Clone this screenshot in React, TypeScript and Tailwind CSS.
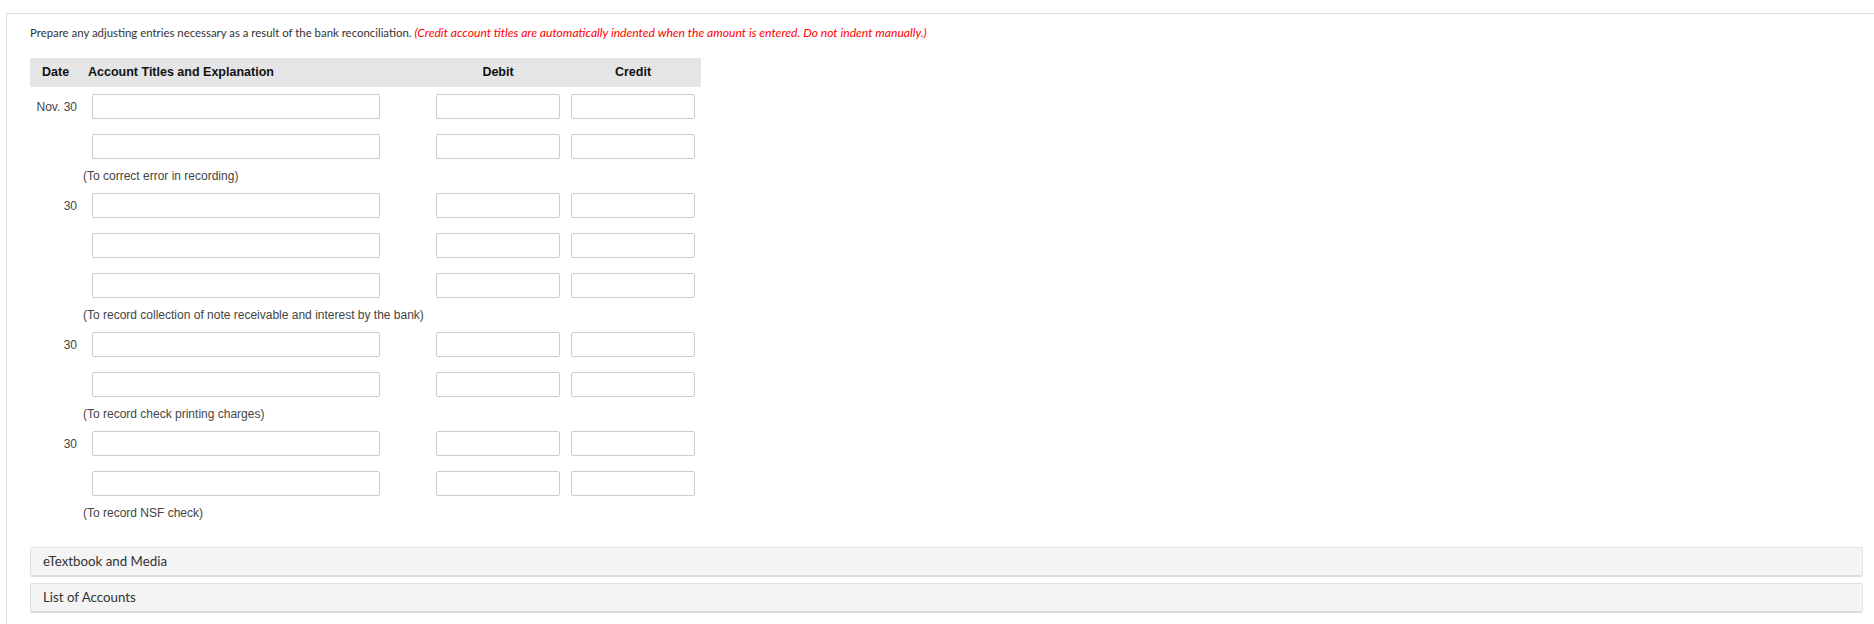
import React from "react";

const tableFont = { fontFamily: '"Liberation Sans", Arial, sans-serif' };

function Input({ w }: { w: string }) {
  return (
    <input
      type="text"
      className={`${w} h-[25px] border border-[#cccccc] rounded-[2px] bg-white outline-none`}
    />
  );
}

function Row({ date }: { date?: string }) {
  return (
    <div className="flex items-center h-[25px]">
      <div className="w-[54px] pr-[7px] text-right text-[12px] text-[#444444]">{date ?? ""}</div>
      <div className="pl-[8px]">
        <Input w="w-[288px]" />
      </div>
      <div className="w-[56px]" />
      <Input w="w-[124px]" />
      <div className="w-[11px]" />
      <Input w="w-[124px]" />
    </div>
  );
}

function Entry({ date, lines, note }: { date: string; lines: number; note: string }) {
  const rows = Array.from({ length: lines });
  return (
    <div className="flex flex-col">
      <div className="flex flex-col gap-[15px]">
        {rows.map((_, i) => (
          <Row key={i} date={i === 0 ? date : undefined} />
        ))}
      </div>
      <div className="h-[18px] leading-[18px] my-[8px] ml-[53px] text-[12px] text-[#444444]">{note}</div>
    </div>
  );
}

export default function App() {
  return (
    <div className="w-[1874px] h-[624px] overflow-hidden bg-white">
      <div className="ml-[6px] mt-[13px] border-l border-t border-[#dddddd] pl-[23px] pr-[11px] pt-[10px] pb-[11px]">
        <p
          className="h-[18px] leading-[18px] text-[11.4px] text-[#333333] whitespace-nowrap"
          style={{ fontFamily: 'Lato, "Open Sans", sans-serif' }}
        >
          Prepare any adjusting entries necessary as a result of the bank reconciliation.{" "}
          <span className="italic text-[12.1px] text-[#ff0000]">
            (Credit account titles are automatically indented when the amount is entered. Do not indent manually.)
          </span>
        </p>

        <div style={tableFont} className="mt-[16px]">
          <div className="flex items-center h-[29px] w-[671px] bg-[#e5e5e5] text-[12.5px] font-bold text-[#111111]">
            <div className="w-[54px] pl-[12px]">Date</div>
            <div className="w-[352px] pl-[4px]">Account Titles and Explanation</div>
            <div className="w-[124px] text-center">Debit</div>
            <div className="w-[11px]" />
            <div className="w-[124px] text-center">Credit</div>
          </div>

          <div className="mt-[7px] flex flex-col">
            <Entry date="Nov. 30" lines={2} note="(To correct error in recording)" />
            <Entry date="30" lines={3} note="(To record collection of note receivable and interest by the bank)" />
            <Entry date="30" lines={2} note="(To record check printing charges)" />
            <Entry date="30" lines={2} note="(To record NSF check)" />
          </div>
        </div>

        <div
          className="mt-[17px] flex flex-col gap-[6px] text-[13.3px] text-[#333333]"
          style={{ fontFamily: 'Lato, "Open Sans", sans-serif' }}
        >
          <div className="h-[30px] flex items-center pl-[12px] bg-[#f4f4f4] border border-[#e2e2e2] border-b-2 border-b-[#dcdcdc] rounded-[2px]">
            eTextbook and Media
          </div>
          <div className="h-[30px] flex items-center pl-[12px] bg-[#f4f4f4] border border-[#e2e2e2] border-b-2 border-b-[#dcdcdc] rounded-[2px]">
            List of Accounts
          </div>
        </div>
      </div>
    </div>
  );
}
